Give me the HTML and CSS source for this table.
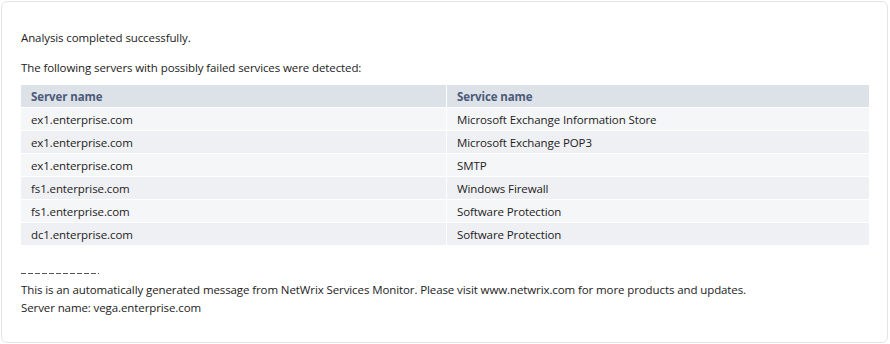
FILE: index.html
```html
<!DOCTYPE html>
<html lang="en">
<head>
  <meta charset="UTF-8">
  <title>Services Monitor Report</title>
  <link rel="stylesheet" href="styles.css">
</head>
<body>
  <div class="card">
    <p class="intro">Analysis completed successfully.</p>
    <p class="intro">The following servers with possibly failed services were detected:</p>

    <table class="report">
      <thead>
        <tr>
          <th>Server name</th>
          <th>Service name</th>
        </tr>
      </thead>
      <tbody>
        <tr><td>ex1.enterprise.com</td><td>Microsoft Exchange Information Store</td></tr>
        <tr><td>ex1.enterprise.com</td><td>Microsoft Exchange POP3</td></tr>
        <tr><td>ex1.enterprise.com</td><td>SMTP</td></tr>
        <tr><td>fs1.enterprise.com</td><td>Windows Firewall</td></tr>
        <tr><td>fs1.enterprise.com</td><td>Software Protection</td></tr>
        <tr><td>dc1.enterprise.com</td><td>Software Protection</td></tr>
      </tbody>
    </table>

    <div class="footer">
      <div class="divider"></div>
      <p>This is an automatically generated message from NetWrix Services Monitor. Please visit www.netwrix.com for more products and updates.</p>
      <p>Server name: vega.enterprise.com</p>
    </div>
  </div>
</body>
</html>
```

FILE: styles.css
```css
body {
  margin: 0;
  padding: 1px;
  background-color: #fff;
  font-family: "Open Sans", "Noto Sans", sans-serif;
  font-size: 11.5px;
  letter-spacing: -0.1px;
  color: #222;
}

.card {
  width: 887px;
  height: 342px;
  box-sizing: border-box;
  border: 1px solid #e4e4e4;
  border-radius: 6px;
  padding: 28px 19px 0 19px;
}

.intro {
  margin: 0 0 14px 0;
  line-height: 16px;
}

.intro + .intro {
  margin-bottom: 9px;
}

.report {
  width: 848px;
  border-collapse: separate;
  border-spacing: 0;
}

.report th,
.report td {
  text-align: left;
  padding: 0 10px;
  height: 22px;
  border-bottom: 1px solid #fff;
}

.report th + th,
.report td + td {
  border-left: 1px solid #fff;
}

.report th {
  background-color: #dde1e8;
  color: #4b5b7b;
  font-weight: bold;
}

.report td {
  background-color: #f5f6f8;
}

.report tbody tr:nth-child(even) td {
  background-color: #eff0f3;
}

.report th:first-child,
.report td:first-child {
  width: 405px;
}

.footer {
  margin-top: 27px;
}

.divider {
  width: 78px;
  height: 1px;
  margin-bottom: 7px;
  background: repeating-linear-gradient(90deg, #555 0 5px, transparent 5px 7px);
}

.footer p {
  margin: 0;
  line-height: 18px;
}
```
